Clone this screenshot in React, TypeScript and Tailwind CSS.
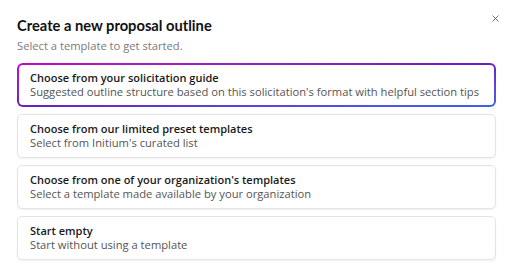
import { X } from "lucide-react";

const options = [
  {
    title: "Choose from our limited preset templates",
    desc: "Select from Initium's curated list",
  },
  {
    title: "Choose from one of your organization's templates",
    desc: "Select a template made available by your organization",
  },
  {
    title: "Start empty",
    desc: "Start without using a template",
  },
];

export default function App() {
  return (
    <div className="w-[512px] h-[274px] bg-white font-['Open_Sans',sans-serif] relative overflow-hidden">
      {/* Close button */}
      <button className="absolute right-[11px] top-[12px] text-[#444] w-[12px] h-[12px] flex items-center justify-center">
        <X size={11} strokeWidth={1.6} />
      </button>

      <div className="flex flex-col px-[17px] pt-[15px]">
        <h1 className="text-[#111] text-[14.7px] font-bold leading-[20px] font-['Lato',sans-serif]">
          Create a new proposal outline
        </h1>
        <p className="text-[#7a7a7a] text-[11.2px] leading-[14px] mt-[4px]">
          Select a template to get started.
        </p>

        <div className="flex flex-col gap-[7px] mt-[10px] w-[479px]">
          {/* Selected card — gradient border */}
          <button className="p-[2px] rounded-[6px] bg-gradient-to-br from-[#c400cc] via-[#6a1fc0] to-[#3a62f0] text-left">
            <div className="bg-white rounded-[4px] px-[11px] py-[6px]">
              <p className="text-[#1a1a1a] text-[11px] font-semibold leading-[14px]">
                Choose from your solicitation guide
              </p>
              <p className="text-[#555] text-[11.2px] leading-[14px]">
                Suggested outline structure based on this solicitation's format with helpful section tips
              </p>
            </div>
          </button>

          {options.map((o) => (
            <button
              key={o.title}
              className="border border-[#e4e4e4] rounded-[5px] px-[12px] py-[7px] text-left bg-white shadow-[0_1px_2px_rgba(0,0,0,0.06)]"
            >
              <p className="text-[#1a1a1a] text-[11px] font-semibold leading-[14px]">
                {o.title}
              </p>
              <p className="text-[#555] text-[11.2px] leading-[14px]">{o.desc}</p>
            </button>
          ))}
        </div>
      </div>
    </div>
  );
}
